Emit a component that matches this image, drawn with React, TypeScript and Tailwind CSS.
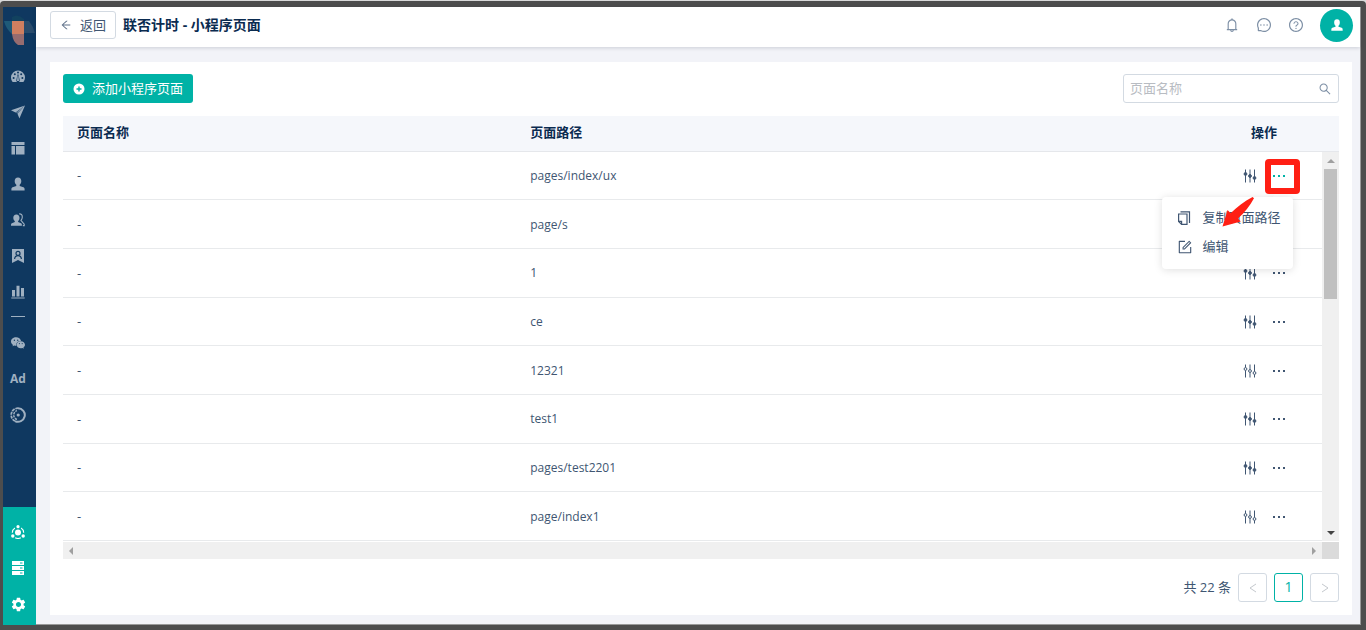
import { useState } from "react";
import clsx from "clsx";
import {
  AiFillWechat,
  AiOutlineArrowLeft,
  AiOutlineBell,
  AiOutlineForm,
  AiOutlineMessage,
  AiOutlineQuestionCircle,
  AiOutlineSearch,
} from "react-icons/ai";
import { MdSettings } from "react-icons/md";

type PageRow = { name: string; path: string; configured: boolean };

const rows: PageRow[] = [
  { name: "-", path: "pages/index/ux", configured: true },
  { name: "-", path: "page/s", configured: true },
  { name: "-", path: "1", configured: true },
  { name: "-", path: "ce", configured: true },
  { name: "-", path: "12321", configured: false },
  { name: "-", path: "test1", configured: true },
  { name: "-", path: "pages/test2201", configured: true },
  { name: "-", path: "page/index1", configured: false },
];

function Logo() {
  return (
    <svg viewBox="0 0 32 36" className="h-9 w-8" aria-hidden="true">
      <path d="M8 11V7Q14 3 20 9V11Z" fill="#12425f" />
      <path d="M0 11H8V24Q2 19 0 11Z" fill="#1f5a78" />
      <path d="M20 11H25Q29 16 31 23H20Z" fill="#2a4c6c" />
      <path d="M8 11H20V24H8Z" fill="#d07f60" />
      <path d="M8 24H20V35H14Q9 32 8 24Z" fill="#976c6f" />
    </svg>
  );
}

function DashboardIcon() {
  return (
    <svg viewBox="0 0 14 14" className="size-3.5" aria-hidden="true">
      <path d="M1.6 13A7 7 0 1 1 12.4 13Z" fill="currentColor" />
      <g fill="#0f3860">
        <circle cx="2.6" cy="9" r="1" />
        <circle cx="3.8" cy="5.2" r="1" />
        <circle cx="7" cy="3.4" r="1" />
        <circle cx="10.2" cy="5.2" r="1" />
        <circle cx="11.4" cy="9" r="1" />
        <path d="M6.5 5.6H7.5L8.6 11A1.7 1.7 0 1 1 5.4 11Z" />
      </g>
      <path d="M6.6 6.5H7.4L8 12H6Z" fill="currentColor" />
    </svg>
  );
}

function SendIcon() {
  return (
    <svg viewBox="0 0 14 14" className="size-3.5" fill="currentColor" aria-hidden="true">
      <path d="M0 5.2L14 .5L4.6 7.6Z" />
      <path d="M14 .5L8.4 13.6L6.4 8.4L12.2 2.8L5.6 8.2L5.2 7.8Z" />
    </svg>
  );
}

function LayoutIcon() {
  return (
    <svg viewBox="0 0 14 14" className="size-3.5" fill="currentColor" aria-hidden="true">
      <path d="M.5 1H13.5V4H.5ZM.5 5H4V13.5H.5ZM5 5H13.5V13.5H5Z" />
    </svg>
  );
}

function UserIcon({ className = "size-3.5" }: { className?: string }) {
  return (
    <svg viewBox="0 0 14 14" className={className} fill="currentColor" aria-hidden="true">
      <path d="M7 .4C9.2.4 10.3 1.9 10.3 4C10.3 5.8 9.7 7 8.7 7.8V9L12.4 10.3C13.2 10.6 13.6 11.3 13.6 12.2V13.6H.4V12.2C.4 11.3.8 10.6 1.6 10.3L5.3 9V7.8C4.3 7 3.7 5.8 3.7 4C3.7 1.9 4.8.4 7 .4Z" />
    </svg>
  );
}

function UsersIcon() {
  return (
    <svg viewBox="0 0 14 14" className="size-3.5" fill="currentColor" aria-hidden="true">
      <path d="M5.4 1.4C7.5 1.4 8.5 2.8 8.5 4.7C8.5 6.2 8 7.3 7.1 8V9.1L10 10.2C10.6 10.5 10.9 11 10.9 11.7V12.8H0V11.7C0 11 .3 10.5.9 10.2L3.8 9.1V8C2.9 7.3 2.3 6.2 2.3 4.7C2.3 2.8 3.3 1.4 5.4 1.4Z" />
      <path
        d="M8.2.9C10.4.7 11.4 2.1 11.3 4.2C11.2 5.6 10.7 6.6 9.9 7.4L13.2 11.2V12.6H11.8"
        fill="none"
        stroke="currentColor"
        strokeWidth="1.1"
      />
    </svg>
  );
}

function BookmarkUserIcon() {
  return (
    <svg viewBox="0 0 14 14" className="size-3.5" aria-hidden="true">
      <path d="M1 0H13V14L7 11L1 14Z" fill="currentColor" />
      <g fill="none" stroke="#0f3860" strokeWidth="1.2">
        <circle cx="7" cy="4.4" r="2" />
        <path d="M3.6 10C3.8 7.8 5 6.7 7 6.7S10.2 7.8 10.4 10" />
      </g>
    </svg>
  );
}

function ChartIcon() {
  return (
    <svg viewBox="0 0 14 14" className="size-3.5" fill="currentColor" aria-hidden="true">
      <path d="M1 5H4V11.5H1ZM5.5.8H8.5V11.5H5.5ZM10 3H13V11.5H10ZM.3 12.4H13.7V13.4H.3Z" />
    </svg>
  );
}

function OrbitIcon() {
  return (
    <svg viewBox="0 0 16 16" className="size-4" fill="none" stroke="currentColor" aria-hidden="true">
      <path d="M8 1.2A6.8 6.8 0 1 1 5 14.1" strokeWidth="2" />
      <path d="M5 14.1A6.8 6.8 0 0 1 8 1.2" strokeWidth="1.7" strokeDasharray="3 .8" />
      <path d="M7 12.4A4.6 4.6 0 0 1 7 3.6" strokeWidth="1.5" strokeDasharray="2.4 .8" />
      <circle cx="8.2" cy="8" r="1.6" fill="currentColor" stroke="none" />
    </svg>
  );
}

function ShareRingIcon() {
  return (
    <svg viewBox="0 0 14 14" className="size-3.5" aria-hidden="true">
      <g fill="none" stroke="currentColor" strokeWidth="1.1">
        <path d="M3.9 3A5.7 5.7 0 0 0 1.3 7.8" />
        <path d="M10.1 3A5.7 5.7 0 0 1 12.7 7.8" />
        <path d="M4.2 12.7A5.7 5.7 0 0 0 9.8 12.7" />
      </g>
      <g fill="currentColor">
        <circle cx="7" cy="7.6" r="3" />
        <circle cx="7" cy="1.7" r="1.6" />
        <circle cx="1.8" cy="11" r="1.7" />
        <circle cx="12.2" cy="11" r="1.7" />
      </g>
    </svg>
  );
}

function ServerIcon() {
  return (
    <svg viewBox="0 0 14 14" className="size-3.5" aria-hidden="true">
      <path d="M1 0H13V4H1ZM1 5H13V9H1ZM1 10H13V14H1Z" fill="currentColor" />
      <path d="M9 2H11.5M9 7H11.5M9 12H11.5" stroke="#00b2a6" />
    </svg>
  );
}

function SlidersIcon({ filled }: { filled: boolean }) {
  return (
    <svg viewBox="0 0 14 14" className="size-3.5" fill="none" stroke="currentColor" aria-hidden="true">
      {filled ? (
        <path d="M2.5.5V13.5M7 .5V13.5M11.5.5V13.5" />
      ) : (
        <path d="M2.5.5V3.5M2.5 6.5V13.5M7 .5V5.5M7 8.5V13.5M11.5.5V7.5M11.5 10.5V13.5" />
      )}
      <g fill={filled ? "currentColor" : "none"}>
        <circle cx="2.5" cy="5" r="1.4" />
        <circle cx="7" cy="7" r="1.4" />
        <circle cx="11.5" cy="9" r="1.4" />
      </g>
    </svg>
  );
}

function DotsIcon() {
  return (
    <svg viewBox="0 0 14 14" className="size-3.5" fill="currentColor" aria-hidden="true">
      <path d="M1 6H3V8H1ZM6 6H8V8H6ZM11 6H13V8H11Z" />
    </svg>
  );
}

function CopyIcon() {
  return (
    <svg viewBox="0 0 14 14" className="size-3.5 shrink-0" fill="none" stroke="currentColor" strokeWidth="1.2" aria-hidden="true">
      <path d="M3.5.8H12.5V12" />
      <path d="M1.6 3H10V13.4H4.6L1.6 10.4Z" />
      <path d="M1.6 10.4H4.6V13.4" />
    </svg>
  );
}

const navTop = [
  { label: "概览", icon: <DashboardIcon /> },
  { label: "推送", icon: <SendIcon /> },
  { label: "页面", icon: <LayoutIcon /> },
  { label: "用户", icon: <UserIcon /> },
  { label: "群组", icon: <UsersIcon /> },
  { label: "标签", icon: <BookmarkUserIcon /> },
  { label: "报表", icon: <ChartIcon /> },
];

const navMiddle = [
  { label: "微信", icon: <AiFillWechat className="size-4" /> },
  { label: "广告", icon: <span className="text-xs font-bold">Ad</span> },
  { label: "生态", icon: <OrbitIcon /> },
];

const navBottom = [
  { label: "连接", icon: <ShareRingIcon /> },
  { label: "数据", icon: <ServerIcon /> },
  { label: "设置", icon: <MdSettings className="size-[17px]" /> },
];

function NavItem({ label, children }: { label: string; children: React.ReactNode }) {
  return (
    <a href="#" aria-label={label} className="flex h-9 w-full items-center justify-center pr-[3px]">
      {children}
    </a>
  );
}

function Sidebar() {
  return (
    <nav className="flex w-[33px] shrink-0 flex-col bg-[#0f3860] text-[#9fb0c1]">
      <div className="flex h-[51px] justify-end pt-[3px]">
        <Logo />
      </div>
      {navTop.map((item) => (
        <NavItem key={item.label} label={item.label}>{item.icon}</NavItem>
      ))}
      <div className="flex h-[15px] justify-center pt-1.5 pr-[3px]">
        <span className="h-px w-3.5 bg-current" />
      </div>
      {navMiddle.map((item) => (
        <NavItem key={item.label} label={item.label}>{item.icon}</NavItem>
      ))}
      <div className="mt-auto bg-[#00b2a6] pt-[7px] pb-[3px] text-white">
        {navBottom.map((item) => (
          <NavItem key={item.label} label={item.label}>{item.icon}</NavItem>
        ))}
      </div>
    </nav>
  );
}

function Header() {
  return (
    <header className="z-10 flex h-10 shrink-0 items-center bg-white pr-[7px] pb-1 pl-3.5 shadow-[0_1px_4px_rgba(0,21,41,0.16)]">
      <button className="flex h-7 w-[66px] items-center justify-center gap-2 rounded-[3px] border border-[#d3dae2] text-[#405672]">
        <AiOutlineArrowLeft className="size-3 text-[#5f7189]" />
        返回
      </button>
      <h1 className="ml-[7px] text-sm font-bold whitespace-pre text-[#0a2b50]">联否计时 - 小程序页面</h1>
      <div className="ml-auto flex items-center gap-4 text-[#7d8fa5]">
        <button aria-label="通知"><AiOutlineBell className="size-4" /></button>
        <button aria-label="消息"><AiOutlineMessage className="size-4" /></button>
        <button aria-label="帮助"><AiOutlineQuestionCircle className="size-4" /></button>
        <button aria-label="账户" className="flex size-[33px] items-center justify-center rounded-full bg-[#00b2a6] text-white">
          <UserIcon className="size-3" />
        </button>
      </div>
    </header>
  );
}

function RowMenu() {
  return (
    <>
      <div className="absolute top-[26px] left-0 size-2 rotate-45 bg-white shadow-md" />
      <div className="absolute top-7 right-[-7px] z-10 flex w-[131px] flex-col rounded bg-white py-[7px] pl-[15px] whitespace-nowrap text-[#405672] shadow-[0_1px_8px_rgba(0,0,0,0.13)]">
        <button className="flex h-[29px] items-center gap-3">
          <CopyIcon />
          <span className="pb-0.5">复制页面路径</span>
        </button>
        <button className="flex h-[29px] items-center gap-2.5">
          <AiOutlineForm className="size-4" />
          <span className="pb-0.5">编辑</span>
        </button>
      </div>
      <div className="pointer-events-none absolute top-[-10px] left-[-7px] z-20 size-[35px] rounded border-[6px] border-[#ff1f14]" />
      <svg viewBox="0 0 32 30" className="pointer-events-none absolute top-7 left-[-50px] z-20 h-[30px] w-8" aria-hidden="true">
        <path d="M.5 29.5L5.6 13L8.6 16.2C15 10 22 4.5 30.6 0L32 1.2C28 8.5 22.5 15.5 16 21.6L18.8 24.6Z" fill="#ff1f14" />
      </svg>
    </>
  );
}

function PageTable() {
  const [openRow, setOpenRow] = useState(0);
  return (
    <div className="mt-[13px] grid grid-cols-[1fr_17px] text-[#405672]">
      <table className="h-[425px] w-full table-fixed border-collapse text-left">
        <thead>
          <tr className="h-[35px] border-b border-[#e5e7eb] bg-[#f5f7fb] text-[#0a2b50]">
            <th scope="col" className="w-[36%] px-3.5 pb-0.5 font-semibold">页面名称</th>
            <th scope="col" className="px-3.5 pb-0.5 font-semibold">页面路径</th>
            <th scope="col" className="w-[116px] pb-0.5 text-center font-semibold">操作</th>
          </tr>
        </thead>
        <tbody>
          {rows.map((row, i) => (
            <tr key={row.path} className="border-b border-[#e8eaec]">
              <td className="px-3.5">{row.name}</td>
              <td className="px-3.5 pt-px text-xs leading-5">{row.path}</td>
              <td className="pt-px">
                <div className="flex items-center justify-center gap-[15px]">
                  <button aria-label="配置">
                    <SlidersIcon filled={row.configured} />
                  </button>
                  <div className="relative flex">
                    <button
                      aria-label="更多"
                      aria-expanded={openRow === i}
                      className={clsx(openRow === i && "text-[#00b2a6]")}
                      onClick={() => setOpenRow(openRow === i ? -1 : i)}
                    >
                      <DotsIcon />
                    </button>
                    {openRow === i && <RowMenu />}
                  </div>
                </div>
              </td>
            </tr>
          ))}
        </tbody>
      </table>

      <div className="flex flex-col">
        <div className="h-9 border-b border-[#e5e7eb] bg-[#f5f7fb]" />
        <div className="flex flex-1 flex-col items-center bg-[#f0f0f0] text-[#a0a0a0]">
          <svg viewBox="0 0 8 4" className="mt-[7px] mb-1.5 h-1 w-2" fill="currentColor" aria-hidden="true"><path d="M4 0L8 4H0Z" /></svg>
          <div className="h-[130px] w-[13px] bg-[#c0c0c0]" />
          <svg viewBox="0 0 8 4" className="mt-auto mb-1.5 h-1 w-2 text-[#444]" fill="currentColor" aria-hidden="true"><path d="M0 0H8L4 4Z" /></svg>
        </div>
      </div>

      <div className="mt-px flex h-[17px] items-center justify-between bg-[#f0f0f0] px-1.5 text-[#a0a0a0]">
        <svg viewBox="0 0 4 8" className="h-2 w-1" fill="currentColor" aria-hidden="true"><path d="M4 0V8L0 4Z" /></svg>
        <svg viewBox="0 0 4 8" className="h-2 w-1" fill="currentColor" aria-hidden="true"><path d="M0 0L4 4L0 8Z" /></svg>
      </div>
      <div className="mt-px h-[17px] bg-[#dbdbdb]" />
    </div>
  );
}

function Pagination() {
  return (
    <div className="mt-3.5 flex items-center justify-end gap-[7px] text-[#405672]">
      <span className="pb-0.5">共 22 条</span>
      <button disabled aria-label="上一页" className="flex size-[29px] items-center justify-center rounded-[3px] border border-[#d3dae2] text-[#c4c8cd]">
        <svg viewBox="0 0 8 10" className="h-2.5 w-2" fill="none" stroke="currentColor" aria-hidden="true"><path d="M7 1L1 5L7 9" /></svg>
      </button>
      <button aria-current="page" className="size-[29px] rounded-[3px] border border-[#00b2a6] pb-0.5 text-sm text-[#00b2a6]">1</button>
      <button disabled aria-label="下一页" className="flex size-[29px] items-center justify-center rounded-[3px] border border-[#d3dae2] text-[#c4c8cd]">
        <svg viewBox="0 0 8 10" className="h-2.5 w-2" fill="none" stroke="currentColor" aria-hidden="true"><path d="M1 1L7 5L1 9" /></svg>
      </button>
    </div>
  );
}

export default function App() {
  return (
    <div className="min-h-screen bg-[#d9d9d9] pt-px font-['Open_Sans','Noto_Sans_CJK_SC',sans-serif] text-[13px] leading-5">
      <div className="flex min-h-[calc(100vh-1px)] rounded-t border-t-[6px] border-r-[5px] border-b-[5px] border-l-[3px] border-[#4d4d4d]">
        <Sidebar />
        <div className="flex min-w-0 flex-1 flex-col border-r border-b border-[#999] bg-[#f2f3f8]">
          <Header />
          <main className="mt-[15px] mr-2 mb-[9px] ml-3.5 flex-1 bg-white px-[13px] pt-3 pb-[13px]">
            <div className="flex items-center justify-between">
              <button className="flex h-[29px] w-[130px] items-center justify-center gap-[7px] rounded-[3px] bg-[#00b2a6] text-white">
                <svg viewBox="0 0 12 12" className="size-3" aria-hidden="true">
                  <circle cx="6" cy="6" r="5.5" fill="currentColor" />
                  <path d="M3.5 6H8.5M6 3.5V8.5" stroke="#00b2a6" strokeWidth="1.4" />
                </svg>
                <span className="pb-0.5">添加小程序页面</span>
              </button>
              <label className="flex h-[29px] w-[216px] items-center rounded-[3px] border border-[#d3dae2] px-1.5">
                <input
                  type="text"
                  aria-label="页面名称"
                  placeholder="页面名称"
                  className="min-w-0 flex-1 pb-0.5 outline-none placeholder:text-[#b8bcc2]"
                />
                <AiOutlineSearch className="size-3.5 text-[#7d8fa5]" />
              </label>
            </div>
            <PageTable />
            <Pagination />
          </main>
        </div>
      </div>
    </div>
  );
}
